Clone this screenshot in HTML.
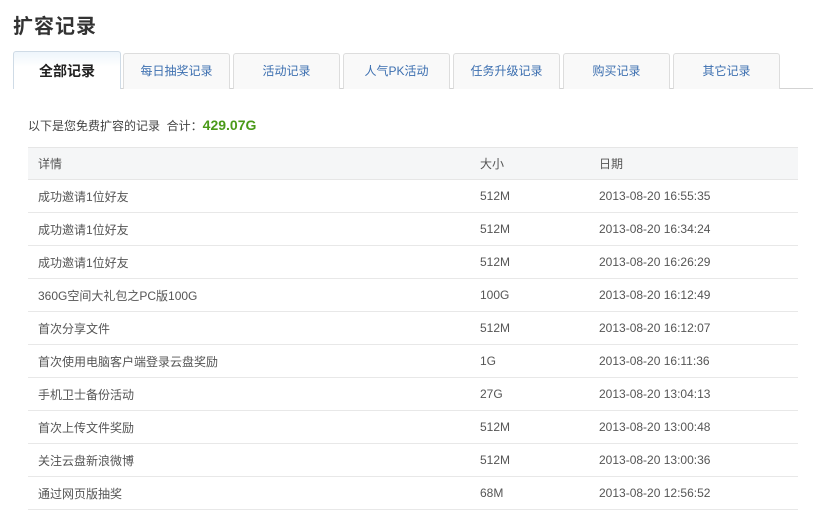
<!DOCTYPE html>
<html><head><meta charset="utf-8"><style>
*{margin:0;padding:0;box-sizing:border-box}
body{width:825px;height:517px;background:#fff;font-family:"Liberation Sans","Noto Sans CJK SC",sans-serif;color:#333;position:relative;overflow:hidden}
h1{position:absolute;left:13px;top:10px;font-size:20px;font-weight:bold;color:#333;letter-spacing:1px}
.line{position:absolute;left:13px;top:88px;width:800px;height:1px;background:#d3d3d3}
.tab{position:absolute;top:53px;height:36px;width:107px;border:1px solid #ddd;border-bottom:none;border-radius:3px 3px 0 0;background:#f9f9f9;color:#3c6fb0;font-size:12px;text-align:center;line-height:35px}
.tab.act{left:13px;top:51px;height:38px;width:108px;background:linear-gradient(#eef5fb,#fff 40%);border-color:#cfdbe6;color:#222;font-size:14px;font-weight:bold;line-height:39px;z-index:2}
.sum{position:absolute;left:28px;top:117px;font-size:12px;color:#444}
.sum b{color:#4a9a18;font-size:14px;font-weight:bold}
table{position:absolute;left:28px;top:147px;width:770px;border-collapse:collapse;font-size:12px;color:#555}
th{background:#f5f6f7;height:32px;text-align:left;font-weight:normal;color:#555;border-top:1px solid #e6e6e6;border-bottom:1px solid #e6e6e6;padding-bottom:1px}
td{height:33px;border-bottom:1px solid #e8e8e8;padding-top:0}
th:first-child,td:first-child{padding-left:10px;width:452px}
th:nth-child(2),td:nth-child(2){width:119px}
</style></head><body>
<h1>扩容记录</h1>
<div class="line"></div>
<div class="tab act">全部记录</div>
<div class="tab" style="left:123px">每日抽奖记录</div>
<div class="tab" style="left:233px">活动记录</div>
<div class="tab" style="left:343px">人气PK活动</div>
<div class="tab" style="left:453px">任务升级记录</div>
<div class="tab" style="left:563px">购买记录</div>
<div class="tab" style="left:673px">其它记录</div>
<div class="sum">以下是您免费扩容的记录&nbsp;&nbsp;合计：<b>429.07G</b></div>
<table>
<tr><th>详情</th><th>大小</th><th>日期</th></tr>
<tr><td>成功邀请1位好友</td><td>512M</td><td>2013-08-20 16:55:35</td></tr>
<tr><td>成功邀请1位好友</td><td>512M</td><td>2013-08-20 16:34:24</td></tr>
<tr><td>成功邀请1位好友</td><td>512M</td><td>2013-08-20 16:26:29</td></tr>
<tr><td>360G空间大礼包之PC版100G</td><td>100G</td><td>2013-08-20 16:12:49</td></tr>
<tr><td>首次分享文件</td><td>512M</td><td>2013-08-20 16:12:07</td></tr>
<tr><td>首次使用电脑客户端登录云盘奖励</td><td>1G</td><td>2013-08-20 16:11:36</td></tr>
<tr><td>手机卫士备份活动</td><td>27G</td><td>2013-08-20 13:04:13</td></tr>
<tr><td>首次上传文件奖励</td><td>512M</td><td>2013-08-20 13:00:48</td></tr>
<tr><td>关注云盘新浪微博</td><td>512M</td><td>2013-08-20 13:00:36</td></tr>
<tr><td>通过网页版抽奖</td><td>68M</td><td>2013-08-20 12:56:52</td></tr>
</table>
</body></html>
